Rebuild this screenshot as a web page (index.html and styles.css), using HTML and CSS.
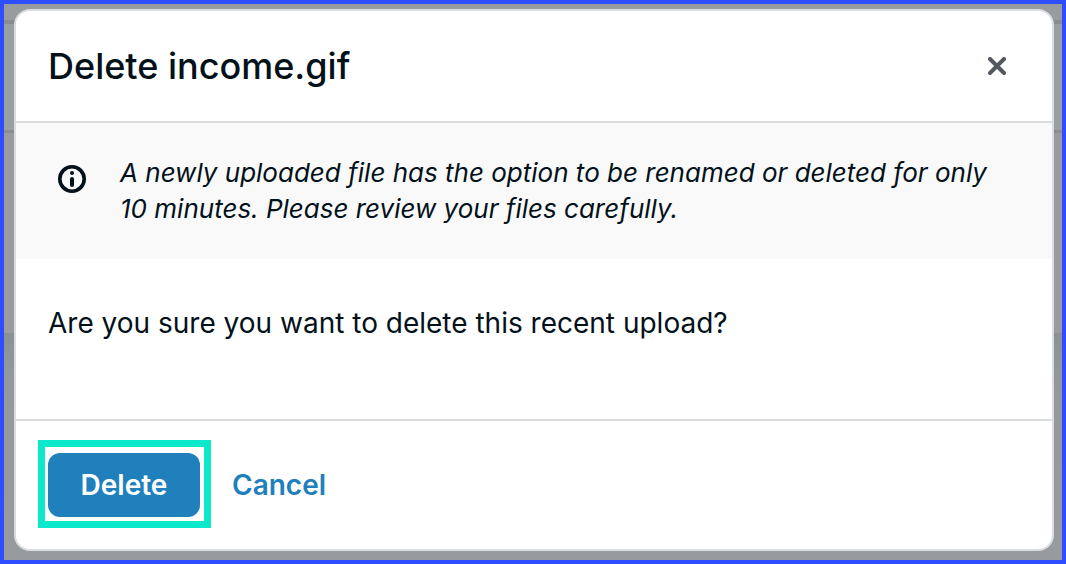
FILE: index.html
```html
<!DOCTYPE html>
<html lang="en">
<head>
    <meta charset="UTF-8">
    <meta name="viewport" content="width=device-width, initial-scale=1.0">
    <title>Delete income.gif</title>
    <link rel="stylesheet" href="styles.css">
</head>
<body>
    <div class="dialog" role="dialog" aria-modal="true" aria-labelledby="dialog-title">
        <header class="dialog-header">
            <h1 class="dialog-title" id="dialog-title">Delete income.gif</h1>
            <button class="close" type="button" aria-label="Close">
                <svg width="18" height="18" viewBox="0 0 18 18" fill="none" stroke="currentColor" stroke-width="4" stroke-linecap="round">
                    <path d="M2 2L16 16M16 2L2 16"/>
                </svg>
            </button>
        </header>
        <div class="notice">
            <svg class="notice-icon" width="28" height="28" viewBox="0 0 28 28" aria-hidden="true">
                <circle cx="14" cy="14" r="12.2" fill="none" stroke="currentColor" stroke-width="3.6"/>
                <circle cx="14" cy="8" r="2" fill="currentColor"/>
                <path d="M14 14V20" stroke="currentColor" stroke-width="4" stroke-linecap="round"/>
            </svg>
            <p class="notice-text">A newly uploaded file has the option to be renamed or deleted for only 10 minutes. Please review your files carefully.</p>
        </div>
        <div class="dialog-body">
            <p>Are you sure you want to delete this recent upload?</p>
        </div>
        <footer class="dialog-footer">
            <div class="highlight">
                <button class="btn btn-primary" type="button">Delete</button>
            </div>
            <button class="btn btn-link" type="button">Cancel</button>
        </footer>
    </div>
</body>
</html>
```
FILE: styles.css
```css
* {
    box-sizing: border-box;
}
body {
    font-family: Inter, sans-serif;
    font-size: 28px;
    line-height: 36px;
    color: #03111a;
    margin: 0;
    min-height: 100vh;
    padding: 5px 8px 9px 10px;
    border: 4px solid #2d4dff;
    /* dimmed page behind the dialog */
    background: linear-gradient(
        #999c9f 20px, #8a8d90 20px, #8a8d90 24px,
        #9a9fa1 24px, #9a9fa1 130px, #8a8e91 130px, #8a8e91 133px,
        #999b9e 133px, #999b9e 333px, #8b9094 333px, #93989c 374px, #989b9e
    );
}
h1, p {
    margin: 0;
}
button {
    font-family: inherit;
    border: none;
    cursor: pointer;
}
.dialog {
    background-color: white;
    border: 2px solid #dadcdf;
    border-radius: 16px;
    overflow: hidden;
}
.dialog-header {
    display: flex;
    align-items: center;
    justify-content: space-between;
    padding: 32px;
    border-bottom: 2px solid #dcdddf;
}
.dialog-title {
    font-size: 36px;
    line-height: 46px;
    font-weight: 450;
}
.close {
    display: flex;
    padding: 14px;
    background: none;
    color: #545861;
}
.notice {
    display: flex;
    align-items: flex-start;
    gap: 34px;
    padding: 32px 42px;
    background-color: #f9f9f9;
}
.notice-icon {
    flex: none;
    margin-top: 10px;
}
.notice-text {
    font-size: 26px;
    font-style: italic;
}
.dialog-body {
    padding: 46px 32px 78px;
}
.dialog-footer {
    display: flex;
    align-items: center;
    padding: 32px;
    border-top: 2px solid #dcdddf;
}
.highlight {
    position: relative;
}
.highlight::after {
    content: "";
    position: absolute;
    inset: -13px -11px -11px -10px;
    border: 7px solid #0ce9ca;
    pointer-events: none;
}
.btn {
    font-size: 28px;
    line-height: 36px;
    font-weight: 600;
    padding: 14px 32px;
}
.btn-primary {
    min-width: 152px;
    background-color: #1f80bc;
    color: white;
    border-radius: 12px;
}
.btn-link {
    background: none;
    color: #1f80bc;
}
```
